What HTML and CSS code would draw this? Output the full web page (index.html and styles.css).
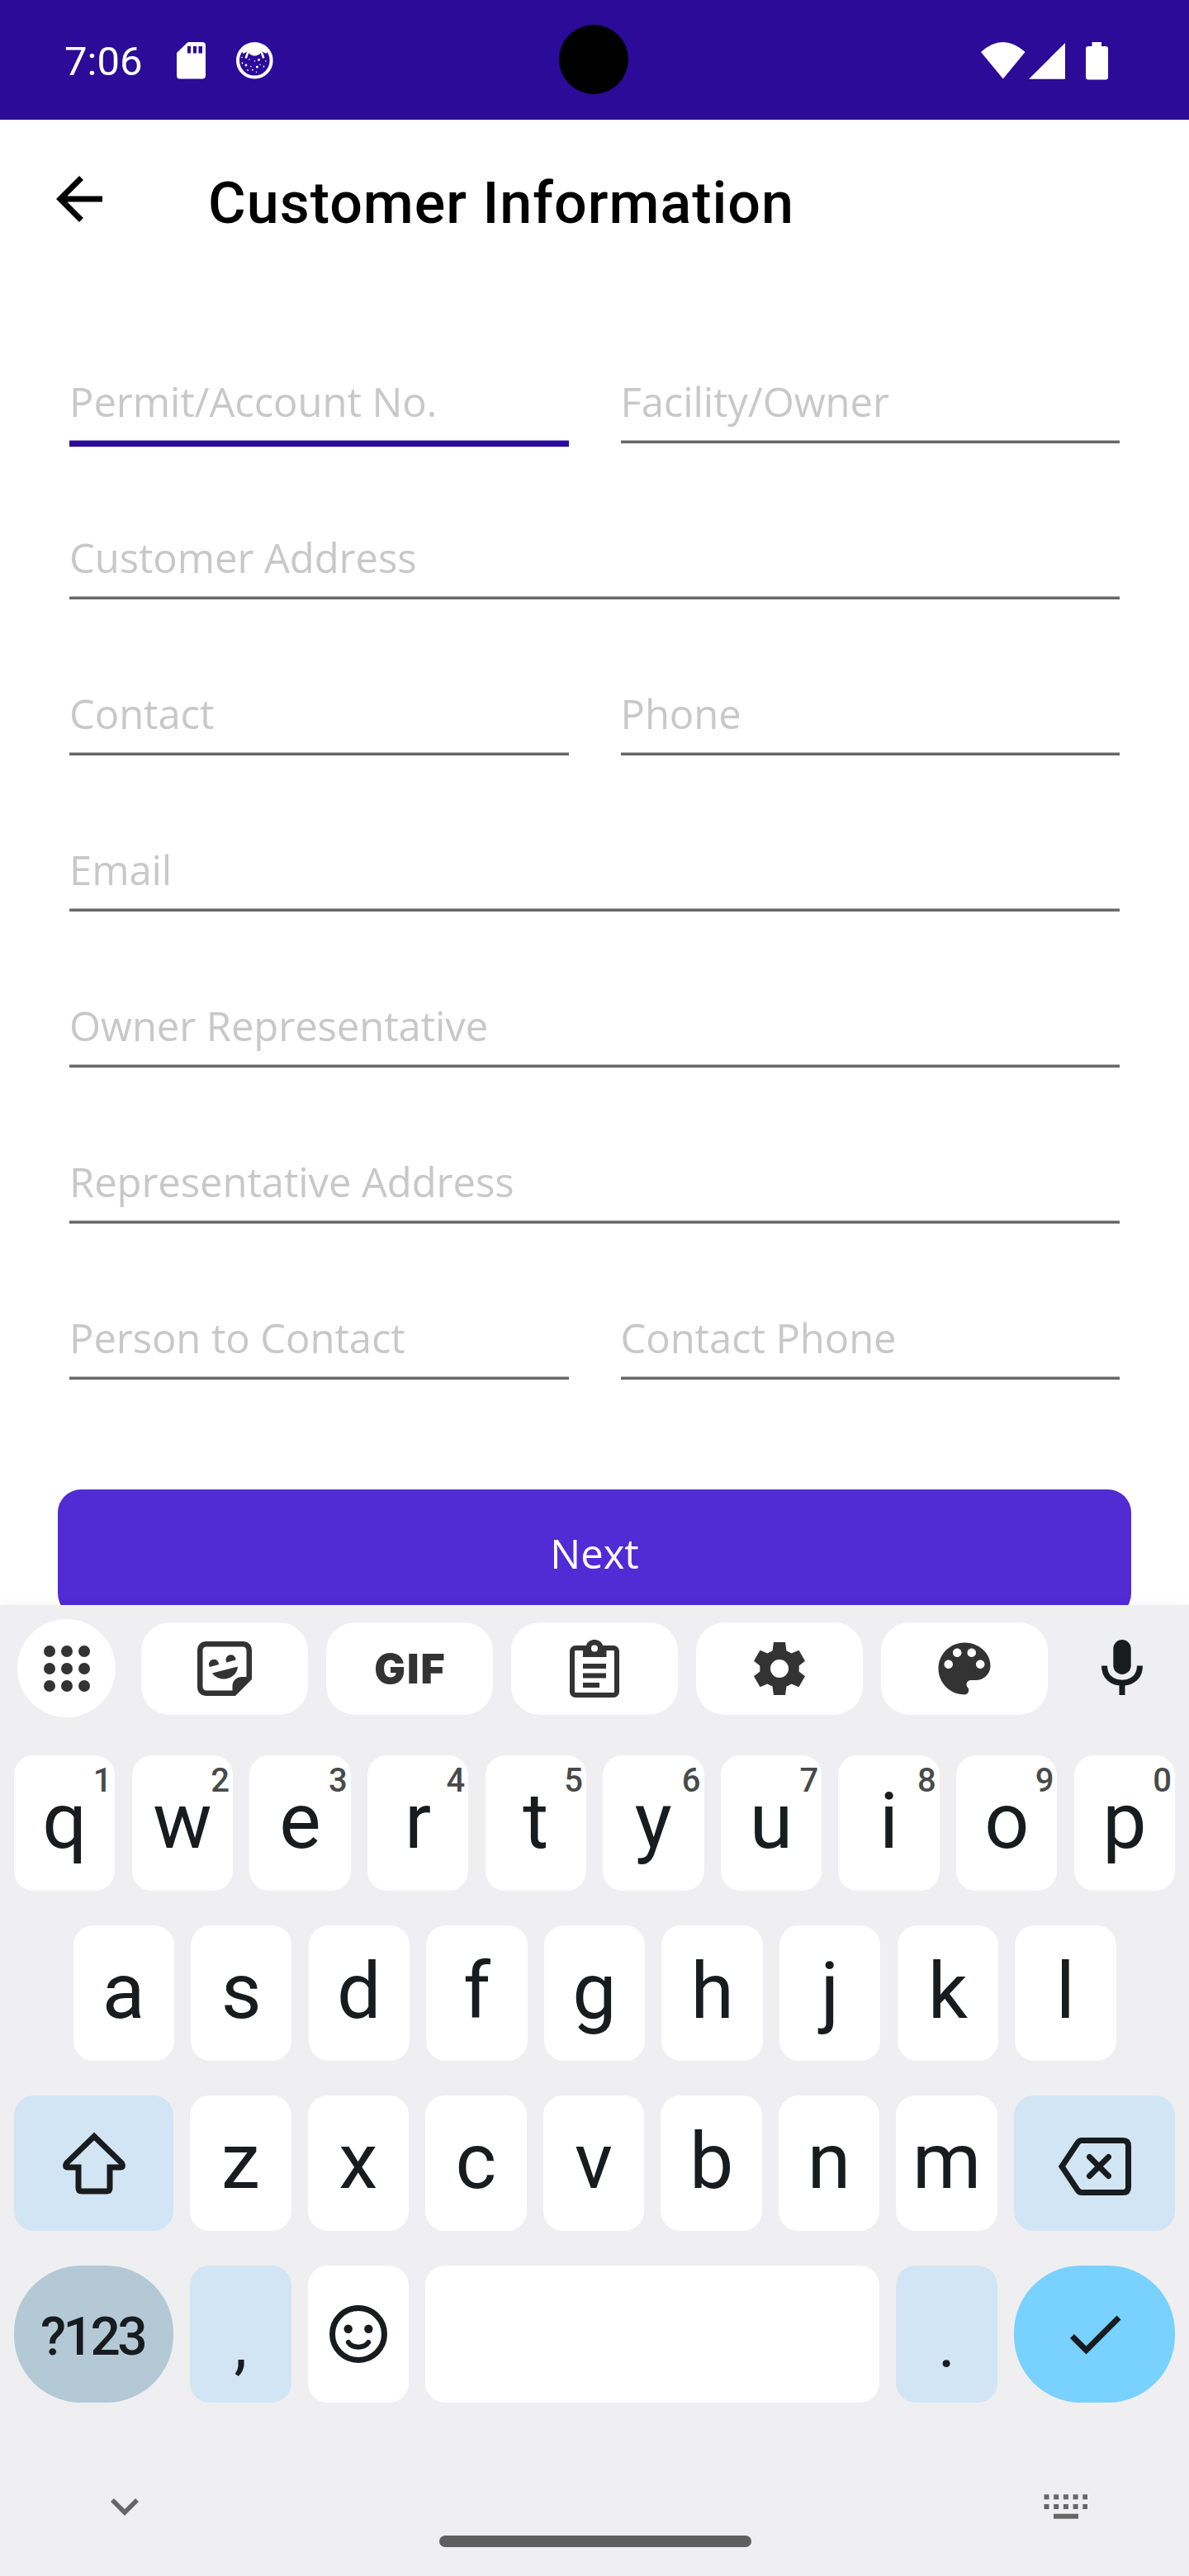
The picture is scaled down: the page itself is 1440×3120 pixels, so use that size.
FILE: index.html
```html
<!DOCTYPE html>
<html lang="en">
<head>
<meta charset="utf-8">
<title>Customer Information</title>
<link rel="stylesheet" href="styles.css">
</head>
<body>
<header class="status">
  <span class="time">7:06</span>
  <svg class="sd" width="35" height="45" viewBox="0 0 35 45"><path fill="#fff" fill-rule="evenodd" d="M13.500 0H31a4 4 0 0 1 4 4V40.500a4 4 0 0 1-4 4H4a4 4 0 0 1-4-4V13ZM13 5v8.500h4V5Zm7 0v8.500h4V5Zm6.500 0v8.500h4.500V5Z"/></svg>
  <svg class="cat" width="45" height="45" viewBox="0 0 45 45" fill="#fff"><circle cx="22.300" cy="22.300" r="20.300" fill="none" stroke="#fff" stroke-width="4"/><path d="M6 9C14-1 31-1 39 9L36.500 14 31.500 11.500C29 14 27 16.500 22.500 16.500S16 14 13.500 11.500L8.500 14Z"/><path d="M14 13l-2 5.500M31 13l2 5.500" stroke="#fff" stroke-width="2.600" stroke-linecap="round"/><circle cx="12" cy="28" r="1.400"/><circle cx="25.300" cy="30" r="1.500"/><circle cx="27.500" cy="21.500" r="1.400"/><circle cx="22.500" cy="23" r=".8"/><circle cx="16" cy="21" r=".8"/><circle cx="18" cy="29.500" r=".8"/><circle cx="33.500" cy="29.500" r=".9"/><circle cx="7.500" cy="25.500" r=".9"/><circle cx="7" cy="18.500" r=".8"/><circle cx="35.800" cy="23" r=".8"/><circle cx="14" cy="34" r=".9"/><circle cx="20" cy="33.700" r=".9"/><circle cx="24.500" cy="36.300" r=".8"/><circle cx="29" cy="27.300" r=".8"/></svg>
  <span class="camera"></span>
  <svg class="signals" width="155" height="46" viewBox="0 0 155 46" fill="#fff"><path d="M0 12Q26.500-12 53.500 12L26.800 44.500Z"/><path d="M58 44.700 102 1V44.700Z"/><path d="M134.500 0h11.500v5h5a3 3 0 0 1 3 3V42.500a3 3 0 0 1-3 3H130a3 3 0 0 1-3-3V8a3 3 0 0 1 3-3h4.500Z"/></svg>
</header>
<main class="page">
  <div class="appbar">
    <svg width="84" height="84" viewBox="0 0 24 24"><path d="M20 11H7.830l5.590-5.590L12 4l-8 8 8 8 1.410-1.410L7.830 13H20v-2z"/></svg>
    <h1>Customer Information</h1>
  </div>
  <form class="form">
    <div class="row"><div class="field focused">Permit/Account No.</div><div class="field">Facility/Owner</div></div>
    <div class="row"><div class="field">Customer Address</div></div>
    <div class="row"><div class="field">Contact</div><div class="field">Phone</div></div>
    <div class="row"><div class="field">Email</div></div>
    <div class="row"><div class="field">Owner Representative</div></div>
    <div class="row"><div class="field">Representative Address</div></div>
    <div class="row"><div class="field">Person to Contact</div><div class="field">Contact Phone</div></div>
  </form>
  <button class="next" type="button">Next</button>
</main>
<section class="keyboard">
  <div class="tools">
    <div class="apps"><svg width="58" height="58" viewBox="0 0 58 58" fill="#333"><circle cx="8" cy="8" r="7"/><circle cx="29" cy="8" r="7"/><circle cx="50" cy="8" r="7"/><circle cx="8" cy="29" r="7"/><circle cx="29" cy="29" r="7"/><circle cx="50" cy="29" r="7"/><circle cx="8" cy="50" r="7"/><circle cx="29" cy="50" r="7"/><circle cx="50" cy="50" r="7"/></svg></div>
    <div class="tool"><svg width="66" height="66" viewBox="0 0 66 66" fill="#333"><path fill-rule="evenodd" d="M10 0H56a10 10 0 0 1 10 10V46L46 66H10A10 10 0 0 1 0 56V10A10 10 0 0 1 10 0ZM11 6.500a4.500 4.500 0 0 0-4.500 4.500V55a4.500 4.500 0 0 0 4.500 4.500H42.500V54A11 11 0 0 1 53.500 43H59.500V11A4.500 4.500 0 0 0 55 6.500Z"/><path d="M15 31A6 6 0 1 1 26 28ZM35.500 25.500A6 6 0 1 1 46.500 22.500ZM18 38.500 49 30.500C48 46 27 51 18 38.500Z"/></svg></div>
    <div class="tool gif">GIF</div>
    <div class="tool"><svg width="60" height="70" viewBox="0 0 60 70" fill="#333"><path fill-rule="evenodd" d="M7 7H20C22-2.300 38-2.300 40 7H53a7 7 0 0 1 7 7V63a7 7 0 0 1-7 7H7a7 7 0 0 1-7-7V14A7 7 0 0 1 7 7ZM7 13a1 1 0 0 0-1 1V63a1 1 0 0 0 1 1H53a1 1 0 0 0 1-1V14a1 1 0 0 0-1-1H44.500V21H16V13ZM30 6.500a4 4 0 1 0 0 8 4 4 0 0 0 0-8Z"/><path d="M16 29H44v6H16ZM16 40.500H44v6H16ZM16 52H36v6H16Z"/></svg></div>
    <div class="tool"><svg width="62" height="64" viewBox="0 0 62 64"><path fill="#333" fill-rule="evenodd" d="M24 0H38L39.500 10.500Q42.500 11.300 45.500 13.500L54.500 9.800 62 22.800 54.700 28.500V35.500L62 41.200 54.500 54.200 45.500 50.500Q42.500 52.700 39.500 53.500L38 64H24L22.500 53.500Q19.500 52.700 16.500 50.500L7.500 54.200 0 41.200 7.300 35.500V28.500L0 22.800 7.500 9.800 16.500 13.500Q19.500 11.300 22.500 10.500ZM31 21a11 11 0 1 0 0 22 11 11 0 0 0 0-22Z"/></svg></div>
    <div class="tool"><svg width="84" height="84" viewBox="0 0 24 24"><path fill="#333" d="M12 3c-4.970 0-9 4.030-9 9s4.030 9 9 9c.83 0 1.500-.67 1.500-1.500 0-.39-.15-.74-.39-1.010-.23-.26-.38-.61-.38-.99 0-.83.67-1.500 1.500-1.500H16c2.760 0 5-2.240 5-5 0-4.420-4.030-8-9-8zm-5.500 9c-.83 0-1.500-.67-1.500-1.500S5.670 9 6.500 9 8 9.670 8 10.500 7.330 12 6.500 12zm3-4C8.670 8 8 7.330 8 6.500S8.670 5 9.500 5s1.500.67 1.500 1.500S10.330 8 9.500 8zm5 0c-.83 0-1.500-.67-1.500-1.500S13.670 5 14.500 5s1.500.67 1.500 1.500S15.330 8 14.500 8zm3 4c-.83 0-1.500-.67-1.500-1.500S16.670 9 17.500 9s1.500.67 1.500 1.500-.67 1.500-1.500 1.500z"/></svg></div>
    <svg class="mic" width="50" height="67" viewBox="0 0 50 67"><rect x="14.300" y="0" width="21.400" height="42" rx="10.700" fill="#181c1e"/><path d="M3.500 31.500C3.500 45 13 52.200 25 52.200S46.500 45 46.500 31.500M25 52V67" fill="none" stroke="#181c1e" stroke-width="7"/></svg>
  </div>
  <div class="keys first">
    <div class="key">q<i>1</i></div><div class="key">w<i>2</i></div><div class="key">e<i>3</i></div><div class="key">r<i>4</i></div><div class="key">t<i>5</i></div><div class="key">y<i>6</i></div><div class="key">u<i>7</i></div><div class="key">i<i>8</i></div><div class="key">o<i>9</i></div><div class="key">p<i>0</i></div>
  </div>
  <div class="keys second">
    <div class="key">a</div><div class="key">s</div><div class="key">d</div><div class="key">f</div><div class="key">g</div><div class="key">h</div><div class="key">j</div><div class="key">k</div><div class="key">l</div>
  </div>
  <div class="keys">
    <div class="key wide"><svg width="78" height="76" viewBox="0 0 78 76"><path d="M39 5.500 5.500 38Q3 43 7 43H20V68Q20 72 24 72H54Q58 72 58 68V43H71Q75 43 72.500 38Z" fill="none" stroke="#181c1e" stroke-width="7"/></svg></div>
    <div class="key">z</div><div class="key">x</div><div class="key">c</div><div class="key">v</div><div class="key">b</div><div class="key">n</div><div class="key">m</div>
    <div class="key wide end erase"><svg width="90" height="70" viewBox="0 0 90 70" fill="none" stroke="#181c1e" stroke-width="7"><path d="M5 35 24 6.500Q26 3.500 29 3.500H79Q85.500 3.500 85.500 10V60Q85.500 66.500 79 66.500H29Q26 66.500 24 63.500Z"/><path d="M38.500 23.500 61.500 46.500M61.500 23.500 38.500 46.500" stroke-linecap="round"/></svg></div>
  </div>
  <div class="keys last">
    <div class="key wide symbols">?123</div>
    <div class="key blue punct">,</div>
    <div class="key"><svg width="70" height="70" viewBox="0 0 70 70"><circle cx="35" cy="35" r="31.500" fill="none" stroke="#181c1e" stroke-width="7"/><circle cx="22.700" cy="28.700" r="5.200" fill="#181c1e"/><circle cx="47.300" cy="28.700" r="5.200" fill="#181c1e"/><path d="M22.800 45C28 52.500 42 52.500 47.200 45" fill="none" stroke="#181c1e" stroke-width="6" stroke-linecap="round"/></svg></div>
    <div class="key space"></div>
    <div class="key blue punct">.</div>
    <div class="key wide end enter"><svg width="84" height="84" viewBox="0 0 24 24"><path fill="#181c1e" d="M9 16.170 4.830 12l-1.420 1.410L9 19 21 7l-1.410-1.410z"/></svg></div>
  </div>
  <footer class="nav">
    <svg class="down" width="34" height="22" viewBox="0 0 34 22"><path d="M2 2 17 17 32 2" fill="none" stroke="#666" stroke-width="5.600"/></svg>
    <span class="handle"></span>
    <svg class="switch" width="54" height="30" viewBox="0 0 54 30"><g stroke="#666" stroke-width="6" stroke-dasharray="6 5.700"><path d="M.5 3.300H53"/><path d="M.5 15H53"/></g><path d="M12 23.700h30v6H12z" fill="#666"/></svg>
  </footer>
</section>
</body>
</html>
```
FILE: styles.css
```css
* { box-sizing: border-box; }
body { margin: 0; width: 1440px; height: 3120px; background: #fff; font-family: Roboto, sans-serif; overflow: hidden; }
svg { display: block; flex: none; }

.status { position: relative; height: 145px; background: #2b0b98; color: #fff; display: flex; align-items: center; padding: 2px 97px 0 78px; }
.time { font-size: 49px; line-height: 58px; padding-top: 2px; width: 136px; }
.cat { margin-left: 37px; }
.camera { position: absolute; left: 677px; top: 30px; width: 84px; height: 84px; border-radius: 50%; background: #000; }
.signals { margin-left: auto; }

.page { height: 1799px; overflow: hidden; }
.appbar { height: 203px; padding: 54px 0 0 54px; display: flex; align-items: flex-start; }
.appbar h1 { margin: 6px 0 0 114px; font-size: 70px; line-height: 82px; font-weight: 500; letter-spacing: 1px; color: #000; white-space: nowrap; }
.form { padding: 0 84px; }
.row { display: flex; gap: 63px; height: 189px; }
.field { flex: 1; display: flex; align-items: flex-end; height: 189px; padding-bottom: 14px; border-bottom: 3px solid #686868; box-shadow: inset 0 -1px #b0b0b0; font: 49px/67px "Open Sans", sans-serif; letter-spacing: -.1px; color: #c8c8c8; white-space: nowrap; }
.field.focused { height: 193px; border-bottom: 7px solid #2b0b98; box-shadow: inset 0 -1px #958bcb; }
.next { display: block; width: 1300px; height: 154px; margin: 133px 70px 0; padding: 0; border: 0; border-radius: 28px; background: #512bd4; color: #fff; font: 49px/67px "Open Sans", sans-serif; }

.keyboard { position: relative; height: 1176px; background: #efeff1; box-shadow: 0 -2px 12px rgba(0, 0, 0, .04); }
.tools { height: 182px; padding: 17px 56px 0 21px; display: flex; align-items: flex-start; }
.apps { width: 119px; height: 119px; border-radius: 50%; background: #fff; display: flex; align-items: center; justify-content: center; margin-right: 9px; }
.tool { width: 202px; height: 112px; margin: 4px 0 0 22px; border-radius: 35px; background: #fff; display: flex; align-items: center; justify-content: center; }
.gif { font: 900 50px/60px Inter, sans-serif; letter-spacing: 2px; padding-left: 2px; color: #333; }
.mic { margin: 25px 0 0 auto; }

.keys { display: flex; gap: 20.200px; height: 164px; margin: 0 17px 42px; }
.keys.second { padding: 0 71.500px; }
.keys.last { height: 166px; margin-bottom: 0; }
.key { position: relative; flex: 1 1 0; border-radius: 24px; background: #fff; display: flex; align-items: center; justify-content: center; font-size: 95px; line-height: 112px; padding-bottom: 4px; color: #181c1e; }
.key:has(svg) { padding: 0; }
.key i { position: absolute; right: 4px; top: 7px; font: 500 40px/47px Roboto, sans-serif; color: #484a4b; }
.wide { flex: 0 0 193px; background: #d2e5f4; }
.wide.end { flex-basis: 195px; }
.key.erase { padding-top: 7px; }
.blue { background: #d2e5f4; }
.last .key { flex: 0 0 122.400px; }
.last .wide { flex: 0 0 193px; }
.last .wide.end { flex: 0 0 195px; }
.last .key.space { flex: 1; }
.last .symbols { border-radius: 81px; background: #b4c9d6; font-size: 64px; font-weight: 500; letter-spacing: -3.500px; padding: 8px 3px 0 0; }
.last .enter { border-radius: 81px; background: #78d1ff; }
.punct { font-size: 80px; padding: 26px 0 0; }

.nav { height: 210px; display: flex; align-items: flex-start; justify-content: space-between; padding: 111px 122px 0 134px; }
.down { margin-top: 5px; }
.handle { width: 378px; height: 14px; margin: 50px 0 0 10px; border-radius: 7px; background: #5f5f5f; }
```
